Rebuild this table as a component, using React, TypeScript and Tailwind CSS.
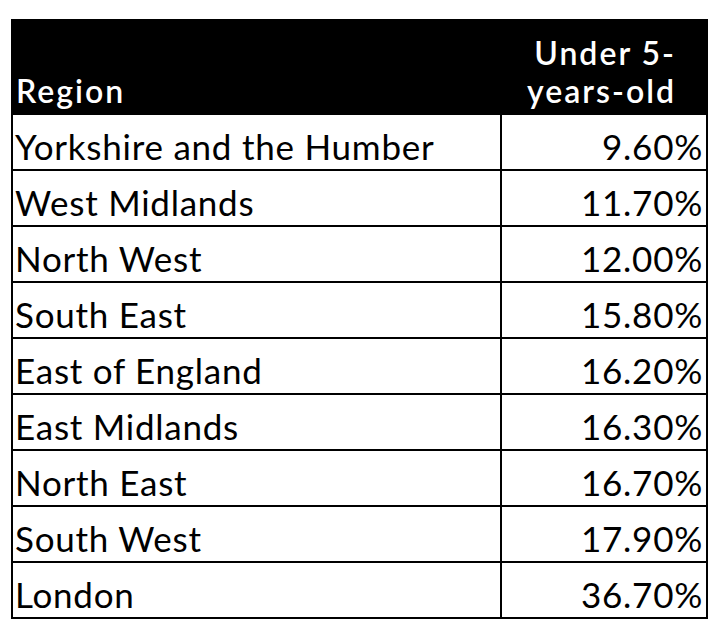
const rows: [string, string][] = [
  ['Yorkshire and the Humber', '9.60%'],
  ['West Midlands', '11.70%'],
  ['North West', '12.00%'],
  ['South East', '15.80%'],
  ['East of England', '16.20%'],
  ['East Midlands', '16.30%'],
  ['North East', '16.70%'],
  ['South West', '17.90%'],
  ['London', '36.70%'],
];

const App = () => {
  return (
    <div className="w-[718px] h-[626px] bg-white pt-[19px] pl-[11px] font-['Lato','Liberation_Sans',sans-serif]">
      <table className="w-[697px] border-collapse border-2 border-black text-black">
        <thead>
          <tr className="h-[94px] bg-black text-white text-[32px] leading-[38px] tracking-[2px]">
            <th className="w-[489px] text-left align-bottom pl-[3px] pb-[3px] font-semibold">Region</th>
            <th className="text-right align-bottom pr-[30px] pb-[3px] font-semibold">
              Under 5-
              <br />
              years-old
            </th>
          </tr>
        </thead>
        <tbody>
          {rows.map(([region, value]) => (
            <tr key={region} className="h-[56px] text-[35px] font-normal tracking-[0.75px]">
              <td className="border-2 border-black pl-[2px] pt-[8px] leading-none">{region}</td>
              <td className="border-2 border-black pr-[3px] pt-[8px] text-right leading-none">{value}</td>
            </tr>
          ))}
        </tbody>
      </table>
    </div>
  );
};

export default App;
